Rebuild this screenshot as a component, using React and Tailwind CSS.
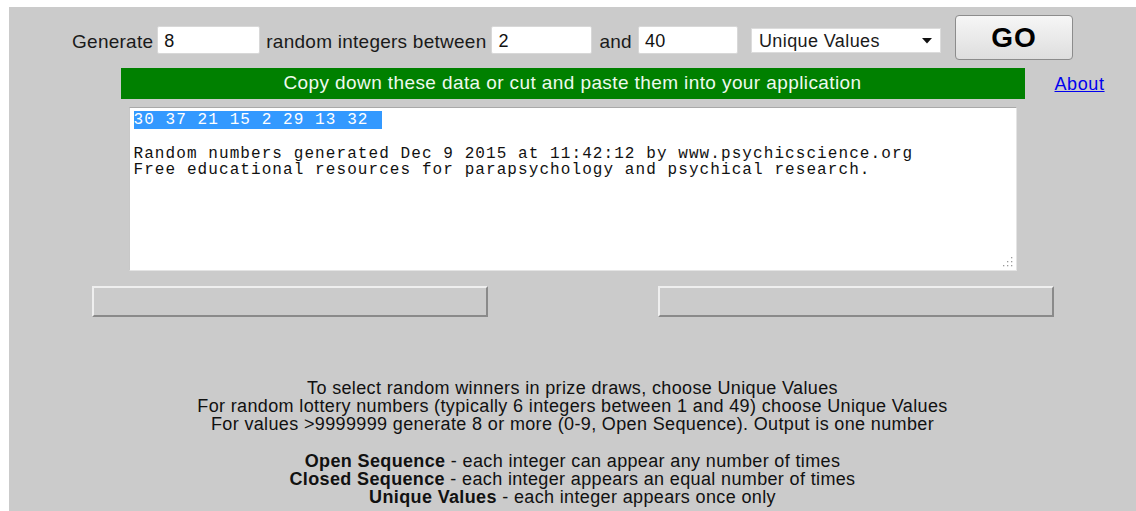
import React from "react";

const sans = { fontFamily: '"Liberation Sans", Arial, sans-serif' };
const mono = { fontFamily: '"Liberation Mono", "Courier New", monospace' };

function Field({ value, width }) {
  return (
    <div
      className={`${width} mt-[11px] h-[28px] bg-white border border-[#d8d8d8] rounded-[2px] flex items-center pl-[6px] pt-[2px] text-[18px] text-[#111]`}
    >
      {value}
    </div>
  );
}

function BevelButton() {
  return (
    <div className="w-[396px] h-[31px] bg-[#cbcbcb] border-2 border-t-[#efefef] border-l-[#efefef] border-b-[#8a8a8a] border-r-[#8a8a8a]" />
  );
}

export default function App() {
  return (
    <div className="min-h-[511px] bg-white pt-[7px] pl-[9px]" style={sans}>
      <div className="bg-[#cbcbcb] min-h-[504px] flex flex-col items-center pt-[8px]">
        {/* Generator controls */}
        <div className="flex items-start h-[45px] text-[19px] text-[#1a1a1a] tracking-[0.25px]">
          <span className="mt-[16px] leading-[22px] mr-[4px]">Generate</span>
          <Field value="8" width="w-[103px]" />
          <span className="mt-[16px] leading-[22px] ml-[6px] mr-[5px]">random integers between</span>
          <Field value="2" width="w-[101px]" />
          <span className="mt-[16px] leading-[22px] ml-[7px] mr-[6px]">and</span>
          <Field value="40" width="w-[100px]" />
          <div className="ml-[13px] mt-[13px] w-[190px] h-[25px] bg-white border border-[#dcdcdc] flex items-center justify-between pl-[7px] pr-[8px] pt-[1px] text-[18px] tracking-[0.4px]">
            <span>Unique Values</span>
            <svg width="10" height="6" viewBox="0 0 10 6">
              <path d="M0 0h10L5 5.5z" fill="#111" />
            </svg>
          </div>
          <button className="ml-[14px] w-[118px] h-[45px] rounded-[4px] border border-[#8c8c8c] bg-gradient-to-b from-[#f6f6f6] to-[#dedede] text-[28px] font-bold text-black tracking-[1px] leading-none">
            GO
          </button>
        </div>

        {/* Instruction bar */}
        <div className="mt-[8px] w-full grid grid-cols-[1fr_904px_1fr] items-center">
          <div />
          <div className="h-[31px] bg-[#008000] flex items-center justify-center text-[19px] text-[#eefaee] tracking-[0.4px]">
            Copy down these data or cut and paste them into your application
          </div>
          <div className="pl-[30px] pt-[1px]">
            <a href="#" className="text-[18px] tracking-[0.6px] text-[#0000ee] underline">
              About
            </a>
          </div>
        </div>

        {/* Output area */}
        <div className="mt-[8px] relative w-[888px] h-[164px] bg-white border border-t-[#a9a9a9] border-l-[#c8c8c8] border-r-[#e4e4e4] border-b-[#e4e4e4] pl-[4px] pt-[4px] text-[16px] leading-[16.8px] tracking-[1.08px] text-[#111] whitespace-pre" style={mono}>
          <div>
            <span className="bg-[#3399ff] text-white pr-[13px]">30 37 21 15 2 29 13 32</span>
          </div>
          <div>{" "}</div>
          <div>Random numbers generated Dec 9 2015 at 11:42:12 by www.psychicscience.org</div>
          <div>Free educational resources for parapsychology and psychical research.</div>
          <svg className="absolute right-[3px] bottom-[3px]" width="10" height="10" viewBox="0 0 10 10">
            <g fill="#9a9a9a">
              <rect x="8" y="0" width="1.3" height="1.3" />
              <rect x="8" y="4" width="1.3" height="1.3" />
              <rect x="4" y="4" width="1.3" height="1.3" />
              <rect x="8" y="8" width="1.3" height="1.3" />
              <rect x="4" y="8" width="1.3" height="1.3" />
              <rect x="0" y="8" width="1.3" height="1.3" />
            </g>
          </svg>
        </div>

        {/* Action buttons */}
        <div className="mt-[15px] flex gap-[170px]">
          <BevelButton />
          <BevelButton />
        </div>

        {/* Help text */}
        <div className="mt-[62px] text-center text-[18px] leading-[18px] text-[#111] tracking-[0.36px]">
          <div>To select random winners in prize draws, choose Unique Values</div>
          <div>For random lottery numbers (typically 6 integers between 1 and 49) choose Unique Values</div>
          <div>For values &gt;9999999 generate 8 or more (0-9, Open Sequence). Output is one number</div>
          <div className="h-[19px]" />
          <div>
            <b>Open Sequence</b> - each integer can appear any number of times
          </div>
          <div>
            <b>Closed Sequence</b> - each integer appears an equal number of times
          </div>
          <div>
            <b>Unique Values</b> - each integer appears once only
          </div>
        </div>
      </div>
    </div>
  );
}
